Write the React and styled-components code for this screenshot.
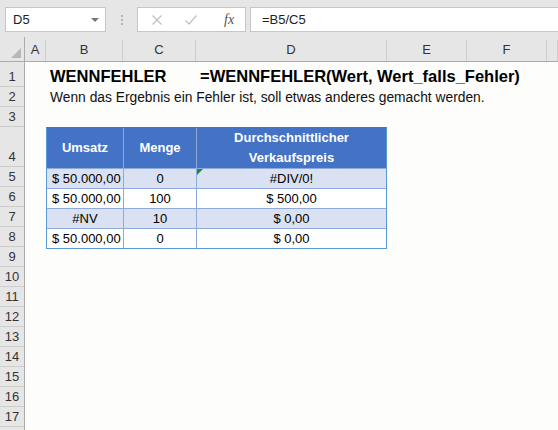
import React from 'react';
import styled, { createGlobalStyle } from 'styled-components';

const GlobalStyle = createGlobalStyle`
  html, body {
    margin: 0;
    padding: 0;
    background: #fdfdfc;
  }
  body {
    font-family: "Liberation Sans", Arial, sans-serif;
    overflow: hidden;
  }
`;

const COL_TEMPLATE = '21px 77px 73px 191px 80px 80px 1fr';
const COLUMNS = ['A', 'B', 'C', 'D', 'E', 'F', ''];
const ROW_HEIGHTS = [25, 20, 20, 40, 20, 20, 20, 20, 20, 20, 20, 20, 20, 20, 20, 20, 20];

const TABLE_ROWS = [
  { umsatz: '$ 50.000,00', menge: '0', preis: '#DIV/0!', error: true },
  { umsatz: '$ 50.000,00', menge: '100', preis: '$ 500,00' },
  { umsatz: '#NV', menge: '10', preis: '$ 0,00', center: true },
  { umsatz: '$ 50.000,00', menge: '0', preis: '$ 0,00' },
];

const Window = styled.div`
  width: 558px;
  height: 430px;
  overflow: hidden;
  display: flex;
  flex-direction: column;
  background: #fdfdfc;
`;

/* ---- formula bar ---- */
const Toolbar = styled.div`
  height: 37px;
  flex: none;
  box-sizing: border-box;
  background: #e6e6e6;
  display: flex;
  align-items: flex-start;
  padding: 7px 0 0 5px;
`;
const NameBox = styled.div`
  width: 101px;
  height: 25px;
  box-sizing: border-box;
  background: #fff;
  border: 1px solid #c6c6c6;
  display: flex;
  align-items: center;
  justify-content: space-between;
  padding: 0 6px 0 7px;
  font-size: 13px;
  color: #222;
`;
const DropArrow = styled.span`
  width: 0;
  height: 0;
  border-left: 4px solid transparent;
  border-right: 4px solid transparent;
  border-top: 4px solid #777;
`;
const Grip = styled.div`
  width: 31px;
  height: 25px;
  display: flex;
  flex-direction: column;
  align-items: center;
  justify-content: center;
  gap: 2px;
  span {
    width: 2px;
    height: 2px;
    background: #b4b4b4;
  }
`;
const FxBox = styled.div`
  width: 109px;
  height: 25px;
  box-sizing: border-box;
  background: #fff;
  border: 1px solid #c6c6c6;
  display: flex;
  align-items: center;
  padding-left: 13px;
  svg:nth-child(2) {
    margin-left: 21px;
  }
`;
const FxIcon = styled.span`
  font-family: "Liberation Serif", "Times New Roman", serif;
  font-style: italic;
  font-size: 14px;
  color: #555;
  margin-left: 26px;
`;
const FormulaInput = styled.div`
  flex: 1;
  height: 25px;
  margin-left: 4px;
  box-sizing: border-box;
  background: #fff;
  border: 1px solid #c6c6c6;
  border-right: none;
  display: flex;
  align-items: center;
  padding-left: 11px;
  font-size: 13px;
  color: #222;
`;

/* ---- column headers ---- */
const HeaderRow = styled.div`
  height: 25px;
  flex: none;
  display: grid;
  grid-template-columns: 25px ${COL_TEMPLATE};
  background: #e6e6e6;
  border-bottom: 1px solid #ababab;
  box-sizing: border-box;
`;
const Corner = styled.div`
  position: relative;
  border-right: 1px solid #ababab;
  &::after {
    content: '';
    position: absolute;
    right: 3px;
    bottom: 3px;
    border-left: 10px solid transparent;
    border-bottom: 10px solid #b7b7b7;
  }
`;
const ColHead = styled.div`
  display: flex;
  align-items: flex-end;
  justify-content: center;
  padding-bottom: 4px;
  font-size: 13px;
  color: #333;
  border-right: 1px solid #cdcdcd;
  margin-top: 3px;
`;

/* ---- sheet ---- */
const Sheet = styled.div`
  flex: 1;
  display: flex;
  min-height: 0;
`;
const RowHeads = styled.div`
  width: 25px;
  flex: none;
  background: #e6e6e6;
  border-right: 1px solid #ababab;
  box-sizing: border-box;
`;
const RowHead = styled.div`
  height: ${p => p.$h}px;
  box-sizing: border-box;
  border-bottom: 1px solid #cdcdcd;
  display: flex;
  align-items: flex-end;
  justify-content: center;
  font-size: 13px;
  line-height: 18px;
  color: #333;
`;
const Body = styled.div`
  flex: 1;
  display: flex;
  flex-direction: column;
`;
const SheetRow = styled.div`
  height: ${p => p.$h}px;
  flex: none;
  display: grid;
  grid-template-columns: ${COL_TEMPLATE};
  align-items: center;
`;
const Title = styled.div`
  grid-column: ${p => p.$col};
  padding: 4px 0 0 4px;
  font-weight: bold;
  font-size: 16.5px;
  color: #000;
  white-space: nowrap;
`;
const Description = styled.div`
  grid-column: 2;
  padding-left: 4px;
  font-size: 13.8px;
  color: #111;
  white-space: nowrap;
`;

const Table = styled.div`
  margin-left: 21px;
  width: 341px;
  box-sizing: border-box;
  display: grid;
  grid-template-columns: 77px 73px 1fr;
  grid-auto-rows: 20px;
  border: 1px solid #5b9bd5;
  border-top-color: #4472c4;
`;
const HeadCell = styled.div`
  grid-row: span 2;
  background: #4472c4;
  color: #fff;
  font-weight: bold;
  font-size: 13px;
  line-height: 20px;
  display: flex;
  align-items: center;
  justify-content: center;
  text-align: center;
  border-right: ${p => (p.$last ? 'none' : '1px solid #8eaadb')};
`;
const Cell = styled.div`
  position: relative;
  background: ${p => (p.$band ? '#d9e1f2' : '#fff')};
  border-top: 1px solid #8eaadb;
  border-right: ${p => (p.$last ? 'none' : '1px solid #8eaadb')};
  font-size: 13px;
  color: #000;
  display: flex;
  align-items: center;
  justify-content: ${p => (p.$left ? 'flex-start' : 'center')};
  padding-left: ${p => (p.$left ? '5px' : '0')};
  box-sizing: border-box;
`;
const ErrorMark = styled.span`
  position: absolute;
  left: 0;
  top: 0;
  border-right: 6px solid transparent;
  border-top: 6px solid #1e8a3b;
`;

function XIcon() {
  return (
    <svg width="12" height="12" viewBox="0 0 12 12">
      <path d="M1.5 1.5 L10.5 10.5 M10.5 1.5 L1.5 10.5" stroke="#c2c2c2" strokeWidth="1.3" fill="none" />
    </svg>
  );
}

function CheckIcon() {
  return (
    <svg width="14" height="12" viewBox="0 0 14 12">
      <path d="M1.5 6.5 L5 10 L12.5 1.5" stroke="#c2c2c2" strokeWidth="1.3" fill="none" />
    </svg>
  );
}

export default function App() {
  return (
    <Window>
      <GlobalStyle />
      <Toolbar>
        <NameBox>
          D5
          <DropArrow />
        </NameBox>
        <Grip>
          <span />
          <span />
          <span />
        </Grip>
        <FxBox>
          <XIcon />
          <CheckIcon />
          <FxIcon>fx</FxIcon>
        </FxBox>
        <FormulaInput>=B5/C5</FormulaInput>
      </Toolbar>

      <HeaderRow>
        <Corner />
        {COLUMNS.map((c, i) => (
          <ColHead key={i}>{c}</ColHead>
        ))}
      </HeaderRow>

      <Sheet>
        <RowHeads>
          {ROW_HEIGHTS.map((h, i) => (
            <RowHead key={i} $h={h}>
              {i + 1}
            </RowHead>
          ))}
          <RowHead $h={20} />
        </RowHeads>
        <Body>
          <SheetRow $h={25}>
            <Title $col={2}>WENNFEHLER</Title>
            <Title $col={4}>=WENNFEHLER(Wert, Wert_falls_Fehler)</Title>
          </SheetRow>
          <SheetRow $h={20}>
            <Description>
              Wenn das Ergebnis ein Fehler ist, soll etwas anderes gemacht werden.
            </Description>
          </SheetRow>
          <SheetRow $h={20} />
          <Table>
            <HeadCell>Umsatz</HeadCell>
            <HeadCell>Menge</HeadCell>
            <HeadCell $last>
              Durchschnittlicher
              <br />
              Verkaufspreis
            </HeadCell>
            {TABLE_ROWS.map((r, i) => (
              <React.Fragment key={i}>
                <Cell $band={i % 2 === 0} $left={!r.center}>
                  {r.umsatz}
                </Cell>
                <Cell $band={i % 2 === 0}>{r.menge}</Cell>
                <Cell $band={i % 2 === 0} $last>
                  {r.error && <ErrorMark />}
                  {r.preis}
                </Cell>
              </React.Fragment>
            ))}
          </Table>
        </Body>
      </Sheet>
    </Window>
  );
}
